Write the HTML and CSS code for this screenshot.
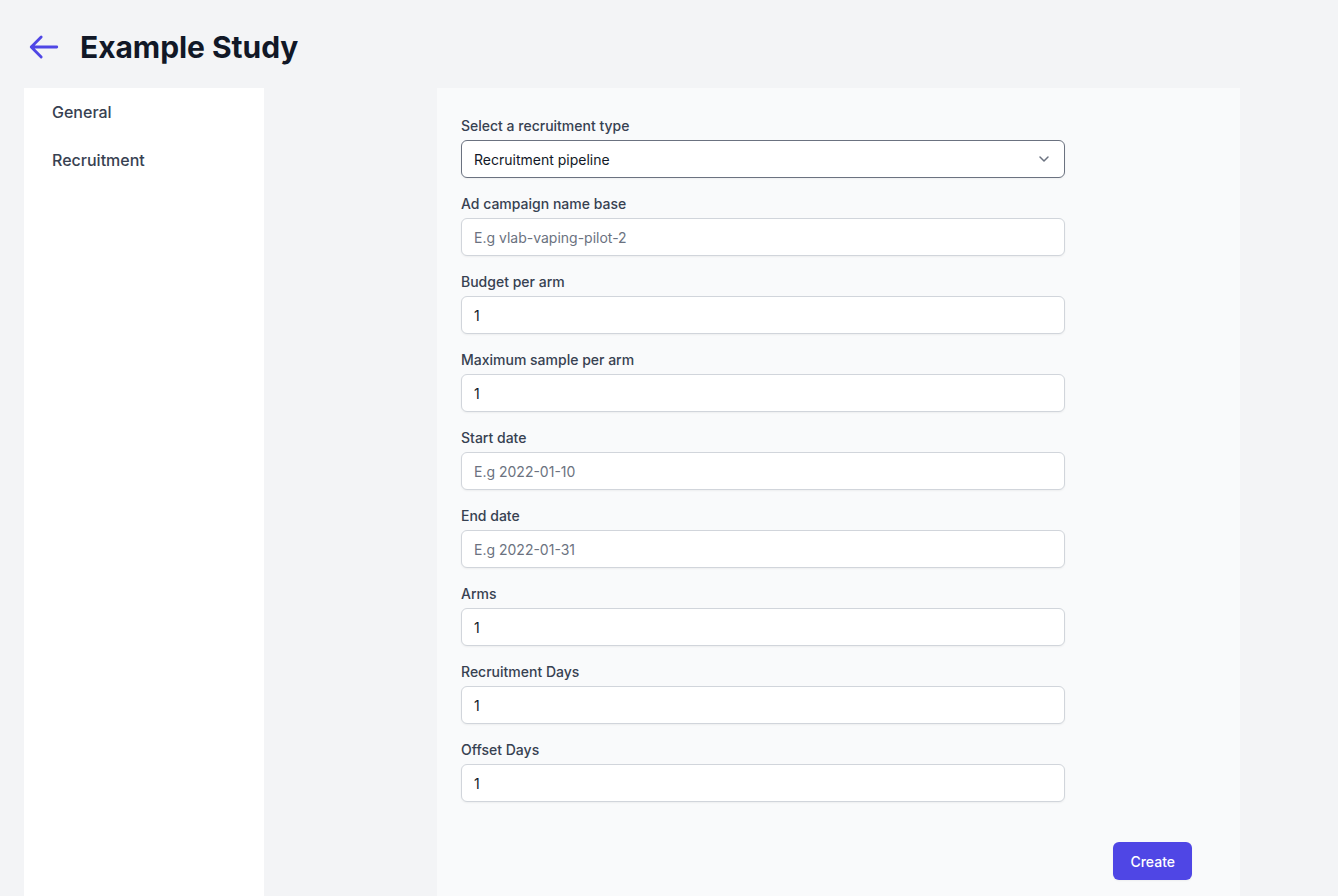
FILE: index.html
```html
<!DOCTYPE html>
<html>
<head>
<meta charset="utf-8">
<link rel="stylesheet" href="styles.css">
</head>
<body>
<header class="header">
  <a class="back" href="#">
    <svg width="34" height="34" viewBox="0 0 24 24" fill="none" stroke="currentColor" stroke-width="2" stroke-linecap="round" stroke-linejoin="round"><path d="M10 19l-7-7m0 0l7-7m-7 7h18"/></svg>
  </a>
  <h1 class="title">Example Study</h1>
</header>
<div class="layout">
  <nav class="sidebar">
    <a class="nav-item" href="#">General</a>
    <a class="nav-item" href="#">Recruitment</a>
  </nav>
  <main class="panel">
    <form class="form">
      <div class="field">
        <label class="label">Select a recruitment type</label>
        <div class="select">
          <span>Recruitment pipeline</span>
          <svg width="20" height="20" viewBox="0 0 20 20" fill="none" stroke="#6b7280" stroke-width="1.5" stroke-linecap="round" stroke-linejoin="round"><path d="M6 8l4 4 4-4"/></svg>
        </div>
      </div>
      <div class="field">
        <label class="label">Ad campaign name base</label>
        <input class="input" placeholder="E.g vlab-vaping-pilot-2">
      </div>
      <div class="field">
        <label class="label">Budget per arm</label>
        <input class="input" value="1">
      </div>
      <div class="field">
        <label class="label">Maximum sample per arm</label>
        <input class="input" value="1">
      </div>
      <div class="field">
        <label class="label">Start date</label>
        <input class="input" placeholder="E.g 2022-01-10">
      </div>
      <div class="field">
        <label class="label">End date</label>
        <input class="input" placeholder="E.g 2022-01-31">
      </div>
      <div class="field">
        <label class="label">Arms</label>
        <input class="input" value="1">
      </div>
      <div class="field">
        <label class="label">Recruitment Days</label>
        <input class="input" value="1">
      </div>
      <div class="field">
        <label class="label">Offset Days</label>
        <input class="input" value="1">
      </div>
    </form>
    <div class="actions">
      <button class="btn" type="button">Create</button>
    </div>
  </main>
</div>
</body>
</html>
```
FILE: styles.css
```css
* { box-sizing: border-box; }
html, body { margin: 0; }
body {
  background: #f3f4f6;
  font-family: Inter, "Noto Sans", sans-serif;
  color: #111827;
  height: 896px;
  overflow: hidden;
}
.header {
  display: flex;
  align-items: center;
  height: 88px;
  padding: 6px 0 0 27px;
}
.back {
  color: #4f46e5;
  display: flex;
  width: 53px;
}
.title {
  margin: 0;
  font-size: 30px;
  font-weight: 700;
  color: #111827;
  letter-spacing: -0.05px;
}
.layout {
  display: flex;
  height: 808px;
}
.sidebar {
  margin-left: 24px;
  width: 240px;
  background: #fff;
  display: flex;
  flex-direction: column;
  padding-top: 12px;
}
.nav-item {
  display: block;
  padding: 0 28px;
  height: 48px;
  line-height: 24px;
  font-size: 16px;
  font-weight: 500;
  color: #374151;
  text-decoration: none;
}
.panel {
  margin-left: 173px;
  width: 803px;
  background: #f9fafb;
  padding: 28px 48px 0 24px;
}
.form {
  width: 604px;
}
.field {
  display: flex;
  flex-direction: column;
  margin-bottom: 16px;
}
.label {
  font-size: 14px;
  line-height: 20px;
  font-weight: 500;
  color: #374151;
  margin-bottom: 4px;
}
.input, .select {
  height: 38px;
  width: 100%;
  border: 1px solid #d1d5db;
  border-radius: 6px;
  background: #fff;
  padding: 0 12px;
  font-family: Inter, "Noto Sans", sans-serif;
  font-size: 14px;
  color: #111827;
  box-shadow: 0 1px 2px rgba(0,0,0,0.05);
  outline: none;
}
.input::placeholder { color: #6b7280; }
.select {
  display: flex;
  align-items: center;
  justify-content: space-between;
  border-color: #6b7280;
  padding-right: 10px;
}
.actions {
  display: flex;
  justify-content: flex-end;
  padding-top: 24px;
}
.btn {
  height: 38px;
  padding: 0 17px;
  background: #4f46e5;
  color: #fff;
  border: none;
  border-radius: 6px;
  font-family: Inter, "Noto Sans", sans-serif;
  font-size: 14px;
  font-weight: 500;
  box-shadow: 0 1px 2px rgba(0,0,0,0.05);
}
```
